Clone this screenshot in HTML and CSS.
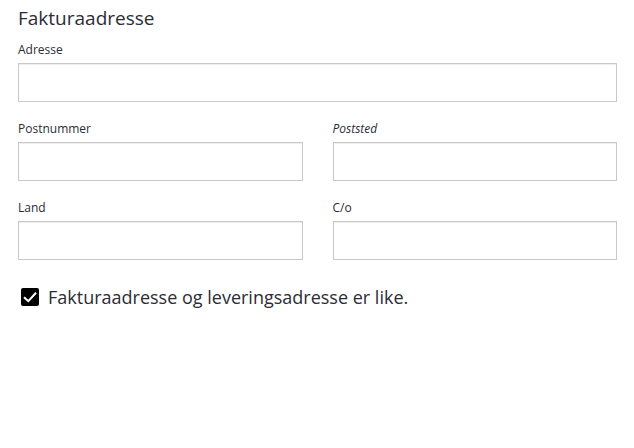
FILE: index.html
```html
<!DOCTYPE html>
<html lang="no">
<head>
<meta charset="utf-8">
<meta name="viewport" content="width=device-width, initial-scale=1">
<title>Fakturaadresse</title>
<link rel="stylesheet" href="styles.css">
</head>
<body>
<form class="address-form">
  <h2 class="title">Fakturaadresse</h2>
  <div class="fields">
    <div class="field field-wide">
      <label for="adresse">Adresse</label>
      <input type="text" id="adresse">
    </div>
    <div class="field">
      <label for="postnummer">Postnummer</label>
      <input type="text" id="postnummer">
    </div>
    <div class="field">
      <label for="poststed" class="optional">Poststed</label>
      <input type="text" id="poststed">
    </div>
    <div class="field">
      <label for="land">Land</label>
      <input type="text" id="land">
    </div>
    <div class="field">
      <label for="co">C/o</label>
      <input type="text" id="co">
    </div>
  </div>
  <div class="same-address">
    <span class="checkbox">
      <input type="checkbox" id="same" checked>
      <svg class="tick" viewBox="0 0 18 18" aria-hidden="true"><path d="M3 9.2 7.3 13.2 15 4.8"/></svg>
    </span>
    <label for="same">Fakturaadresse og leveringsadresse er like.</label>
  </div>
</form>
</body>
</html>
```

FILE: styles.css
```css
* {
  box-sizing: border-box;
}

body {
  margin: 0;
  background: #fff;
  color: #2c2c35;
  font-family: "Open Sans", sans-serif;
}

.address-form {
  padding: 6px 17px 0 18px;
}

.title {
  margin: 0 0 11px;
  font-size: 19px;
  line-height: 24px;
  font-weight: 400;
}

.fields {
  display: grid;
  grid-template-columns: 1fr 1fr;
  gap: 18px 30px;
}

.field {
  display: flex;
  flex-direction: column;
  gap: 4px;
  font-size: 12px;
  line-height: 18px;
}

.field-wide {
  grid-column: 1 / -1;
}

.optional {
  font-style: italic;
}

.field input {
  width: 100%;
  height: 39px;
  padding: 0 12px;
  border: 1px solid #c8c8c8;
  border-radius: 0;
  background: #fff;
  font: inherit;
  box-shadow: inset 0 1px 1px #eee;
}

.same-address {
  display: flex;
  align-items: center;
  gap: 9px;
  margin-top: 25px;
  padding-left: 3px;
  font-size: 18px;
  line-height: 24px;
}

.checkbox {
  display: grid;
  width: 18px;
  height: 18px;
}

.checkbox input,
.tick {
  grid-area: 1 / 1;
  width: 18px;
  height: 18px;
  margin: 0;
}

.checkbox input {
  appearance: none;
  border: 2px solid #000;
  border-radius: 2px;
}

.checkbox input:checked {
  background: #000;
}

.tick {
  display: none;
  fill: none;
  stroke: #fff;
  stroke-width: 2;
  pointer-events: none;
}

.checkbox input:checked + .tick {
  display: block;
}
```
